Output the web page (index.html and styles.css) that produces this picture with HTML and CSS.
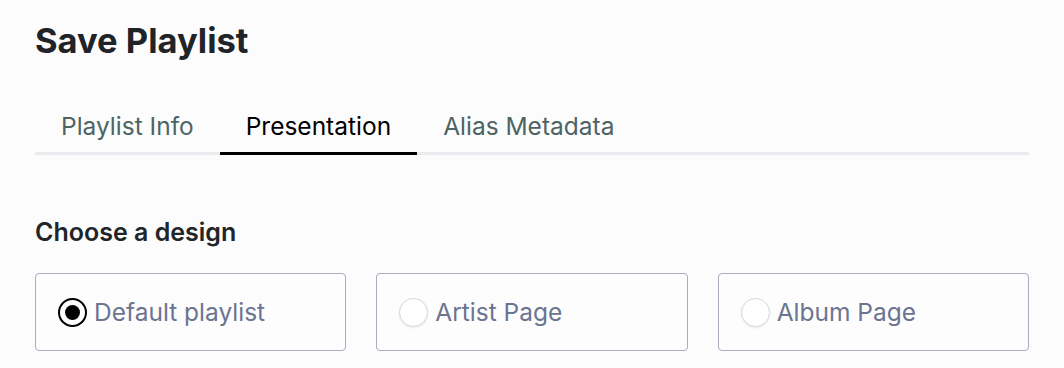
FILE: index.html
```
<!DOCTYPE html>
<html lang="en">
<head>
	<meta charset="UTF-8">
	<title>Save Playlist</title>
	<link rel="stylesheet" href="styles.css">
</head>
<body>
	<div class="page">
		<h1 class="title">Save Playlist</h1>
		<div class="tabs">
			<div class="tab">Playlist Info</div>
			<div class="tab active">Presentation</div>
			<div class="tab">Alias Metadata</div>
		</div>
		<h2 class="section-title">Choose a design</h2>
		<div class="designs">
			<label class="design">
				<span class="radio checked"></span>
				<span class="design-name">Default playlist</span>
			</label>
			<label class="design">
				<span class="radio"></span>
				<span class="design-name">Artist Page</span>
			</label>
			<label class="design">
				<span class="radio"></span>
				<span class="design-name">Album Page</span>
			</label>
		</div>
	</div>
</body>
</html>
```

FILE: styles.css
```
*{
	margin: 0;
	padding: 0;
	box-sizing: border-box;
}
body{
	background: #fcfcfd;
	font-family: Inter, "Liberation Sans", sans-serif;
}
.page{
	padding: 21px 35px 0 35px;
}
.title{
	font-size: 34.5px;
	line-height: 40px;
	font-weight: 700;
	color: #202327;
}
.tabs{
	display: flex;
	margin-top: 51px;
	border-bottom: 3px solid #ebebef;
}
.tab{
	padding: 0 26px 12px 26px;
	font-size: 24.5px;
	line-height: 28px;
	color: #4d6464;
}
.tab.active{
	color: #000;
	border-bottom: 3px solid #000;
	margin-bottom: -3px;
}
.section-title{
	margin-top: 62px;
	font-size: 25px;
	line-height: 30px;
	font-weight: 600;
	color: #222528;
}
.designs{
	display: grid;
	grid-template-columns: repeat(3, 1fr);
	gap: 30px;
	margin-top: 26px;
}
.design{
	display: flex;
	align-items: center;
	gap: 7px;
	height: 78px;
	padding: 0 22px;
	border: 1px solid #a9adbd;
	border-radius: 4px;
	background: #fdfdfe;
}
.radio{
	flex: none;
	width: 29px;
	height: 29px;
	border-radius: 50%;
	border: 1px solid #d3d7de;
	background: #fff;
	box-shadow: 0 1px 2px rgba(0,0,0,.08);
}
.radio.checked{
	border: 2px solid #000;
	box-shadow: none;
	position: relative;
}
.radio.checked::after{
	content: '';
	position: absolute;
	left: 5px;
	top: 5px;
	width: 15px;
	height: 15px;
	border-radius: 50%;
	background: #000;
}
.design-name{
	font-size: 24.5px;
	color: #6b7490;
}
```
